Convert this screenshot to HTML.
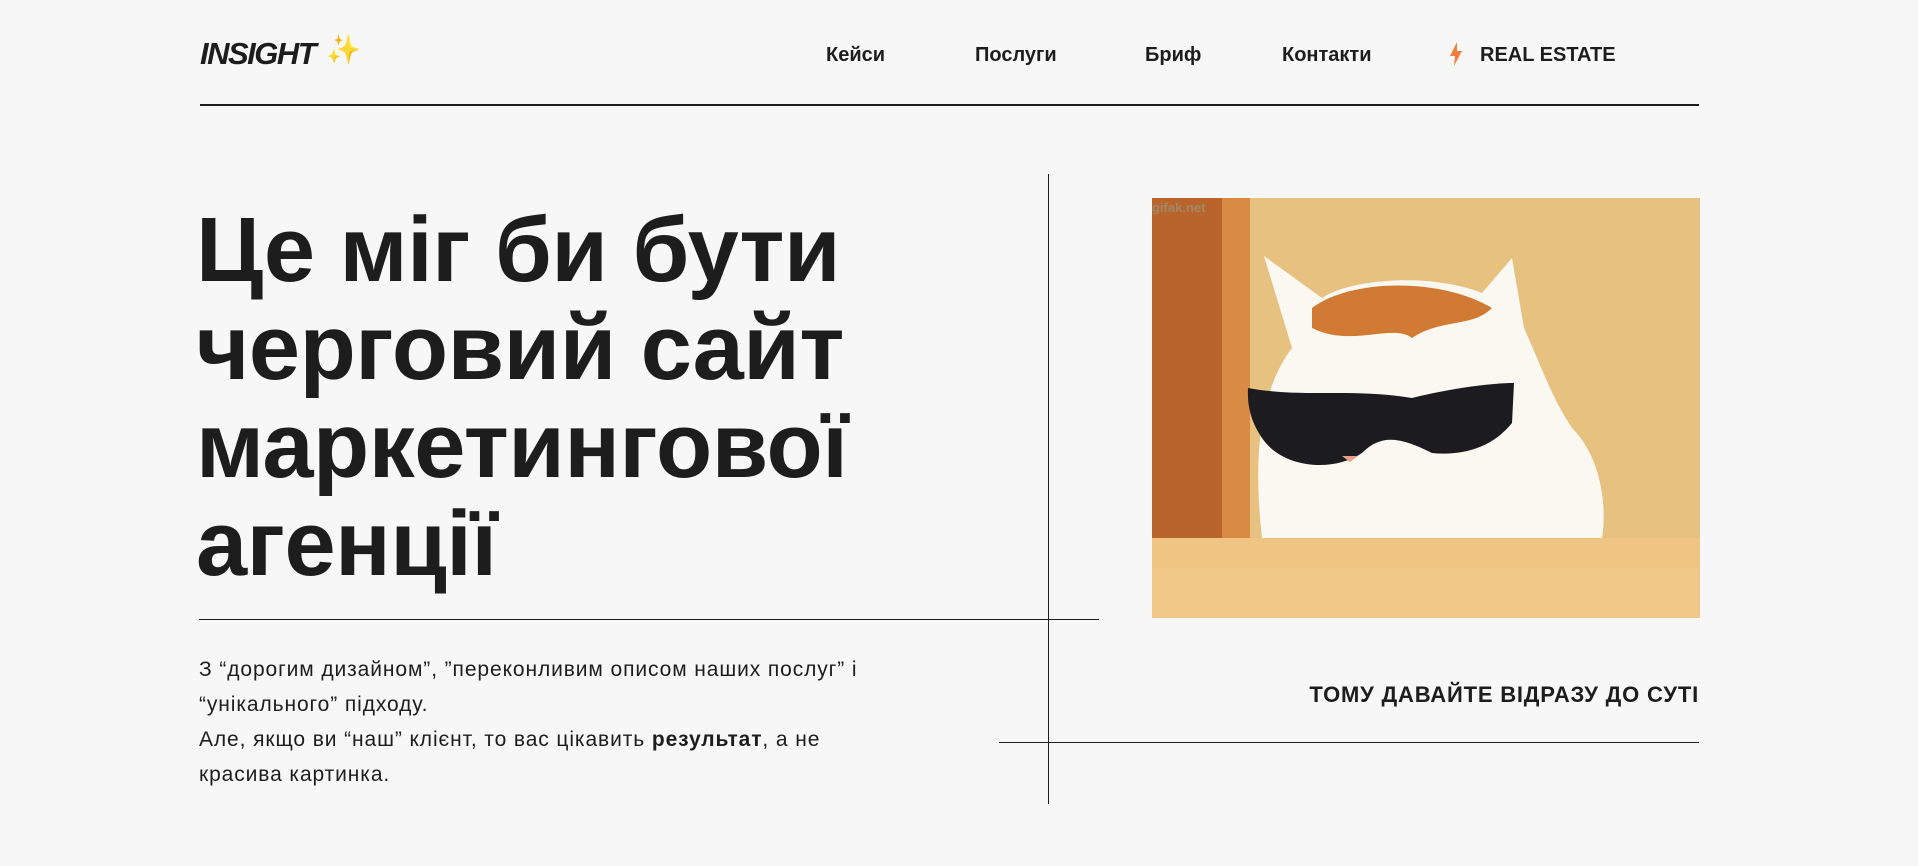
<!DOCTYPE html>
<html><head><meta charset="utf-8"><style>
html,body{margin:0;padding:0;background:#f7f7f7;width:1918px;height:866px;overflow:hidden;font-family:"Liberation Sans","DejaVu Sans",sans-serif;color:#1d1d1d;}
.a{position:absolute;}
.nav{font-size:20px;font-weight:700;top:44px;color:#1d1d1d;}
h1{position:absolute;left:196px;top:201px;margin:0;font-size:92px;line-height:98px;font-weight:700;letter-spacing:-0.5px;color:#1d1d1d;}
.p{left:199px;top:652px;font-size:21px;line-height:35px;letter-spacing:0.9px;color:#1d1d1d;}
</style></head><body>
<div class="a" style="left:200px;top:36px;font-size:31px;font-weight:700;font-style:italic;letter-spacing:-1.5px;">INSIGHT</div>
<div class="a" style="left:326px;top:33px;font-size:28px;color:#f5c842;">✨</div>
<div class="a nav" style="left:826px">Кейси</div>
<div class="a nav" style="left:975px">Послуги</div>
<div class="a nav" style="left:1145px">Бриф</div>
<div class="a nav" style="left:1282px">Контакти</div>
<svg class="a" style="left:1449px;top:42px" width="14" height="24" viewBox="0 0 14 24"><path d="M8 0 L1 14 H6 L5 24 L13 9 H8 Z" fill="#f47c3c"/></svg>
<div class="a nav" style="left:1480px">REAL ESTATE</div>
<div class="a" style="left:200px;top:104px;width:1499px;height:2px;background:#1d1d1d"></div>
<div class="a" style="left:1048px;top:174px;width:1px;height:630px;background:#1d1d1d"></div>
<h1>Це міг би бути<br>черговий сайт<br>маркетингової<br>агенції</h1>
<div class="a" style="left:199px;top:619px;width:900px;height:1px;background:#1d1d1d"></div>
<div class="a p">З “дорогим дизайном”, ”переконливим описом наших послуг” і<br>“унікального” підходу.<br>Але, якщо ви “наш” клієнт, то вас цікавить <b>результат</b>, а не<br>красива картинка.</div>
<svg class="a" style="left:1152px;top:198px" width="548" height="420" viewBox="0 0 548 420">
<rect width="548" height="420" fill="#e6c17f"/>
<rect x="0" y="0" width="75" height="375" fill="#b9642c"/>
<rect x="70" y="0" width="28" height="375" fill="#d98b45"/>
<rect x="0" y="340" width="548" height="80" fill="#f0c584"/>
<rect x="0" y="370" width="548" height="50" fill="#f2c888"/>
<path d="M110 340 C100 250 110 190 140 150 L112 58 L170 100 C200 80 280 75 330 95 L360 60 L372 130 C390 170 400 200 420 230 C450 260 455 310 450 340 Z" fill="#fbf8f2"/>
<path d="M160 110 C200 80 290 80 340 110 C320 130 290 120 260 140 C240 125 200 150 160 130 Z" fill="#d17a33"/>
<path d="M96 190 C150 200 200 190 260 200 C300 190 340 185 362 185 L360 225 C340 250 310 258 280 255 C250 240 230 235 210 255 C180 275 130 270 110 240 C100 225 95 210 96 190 Z" fill="#1c1c20"/>
<path d="M190 258 l8 6 l8 -6 z" fill="#e9a08b"/>
</svg>
<div class="a" style="left:1152px;top:200px;font-size:13px;color:#a08a66;font-weight:700">gifak.net</div>
<div class="a" style="right:219px;top:682px;font-size:22px;font-weight:700;letter-spacing:0.8px;">ТОМУ ДАВАЙТЕ ВІДРАЗУ ДО СУТІ</div>
<div class="a" style="left:999px;top:742px;width:700px;height:1px;background:#1d1d1d"></div>
</body></html>
